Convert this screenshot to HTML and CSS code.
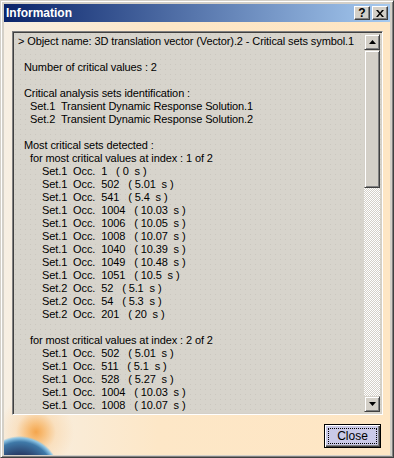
FILE: index.html
```html
<!DOCTYPE html>
<html lang="en">
<head>
    <meta charset="UTF-8">
    <title>Information</title>
    <link rel="stylesheet" href="styles.css">
</head>
<body>
    <div class="window">
        <div class="titlebar">
            <span class="title">Information</span>
            <div class="title-buttons">
                <span class="tbtn">?</span>
                <span class="tbtn">
                    <svg width="8" height="7" viewBox="0 0 8 7"><path d="M0 0h2l2 2.5 2-2.5h2l-3 3.5 3 3.5h-2l-2-2.5-2 2.5h-2l3-3.5z" fill="#000"/></svg>
                </span>
            </div>
        </div>
        <div class="dialog">
            <div class="textbox">
                <div class="text">
                    <div class="l0">&gt; Object name: 3D translation vector (Vector).2 - Critical sets symbol.1</div>
                    <div class="l0"> </div>
                    <div class="l1">Number of critical values : 2</div>
                    <div class="l0"> </div>
                    <div class="l1">Critical analysis sets identification :</div>
                    <div class="l2">Set.1  Transient Dynamic Response Solution.1</div>
                    <div class="l2">Set.2  Transient Dynamic Response Solution.2</div>
                    <div class="l0"> </div>
                    <div class="l1">Most critical sets detected :</div>
                    <div class="l2">for most critical values at index : 1 of 2</div>
                    <div class="l3">Set.1  Occ.  1   ( 0  s )</div>
                    <div class="l3">Set.1  Occ.  502   ( 5.01  s )</div>
                    <div class="l3">Set.1  Occ.  541   ( 5.4  s )</div>
                    <div class="l3">Set.1  Occ.  1004   ( 10.03  s )</div>
                    <div class="l3">Set.1  Occ.  1006   ( 10.05  s )</div>
                    <div class="l3">Set.1  Occ.  1008   ( 10.07  s )</div>
                    <div class="l3">Set.1  Occ.  1040   ( 10.39  s )</div>
                    <div class="l3">Set.1  Occ.  1049   ( 10.48  s )</div>
                    <div class="l3">Set.1  Occ.  1051   ( 10.5  s )</div>
                    <div class="l3">Set.2  Occ.  52   ( 5.1  s )</div>
                    <div class="l3">Set.2  Occ.  54   ( 5.3  s )</div>
                    <div class="l3">Set.2  Occ.  201   ( 20  s )</div>
                    <div class="l0"> </div>
                    <div class="l2">for most critical values at index : 2 of 2</div>
                    <div class="l3">Set.1  Occ.  502   ( 5.01  s )</div>
                    <div class="l3">Set.1  Occ.  511   ( 5.1  s )</div>
                    <div class="l3">Set.1  Occ.  528   ( 5.27  s )</div>
                    <div class="l3">Set.1  Occ.  1004   ( 10.03  s )</div>
                    <div class="l3">Set.1  Occ.  1008   ( 10.07  s )</div>
                </div>
                <div class="scrollbar">
                    <div class="sbtn">
                        <svg width="7" height="4" viewBox="0 0 7 4"><path d="M3.5 0L7 4H0z" fill="#000"/></svg>
                    </div>
                    <div class="thumb"></div>
                    <div class="track"></div>
                    <div class="sbtn">
                        <svg width="7" height="4" viewBox="0 0 7 4"><path d="M0 0h7L3.5 4z" fill="#000"/></svg>
                    </div>
                </div>
            </div>
            <div class="footer">
                <button class="close-btn"><span class="focus">Close</span></button>
            </div>
        </div>
    </div>
</body>
</html>
```

FILE: styles.css
```css
html, body {
    margin: 0;
    padding: 0;
}
body {
    width: 394px;
    height: 458px;
    overflow: hidden;
    font-family: "Liberation Sans", Arial, sans-serif;
    font-size: 12px;
}
.window {
    width: 394px;
    height: 458px;
    box-sizing: border-box;
    background: #d4d0c8;
    border: 1px solid;
    border-color: #d4d0c8 #404040 #404040 #d4d0c8;
    box-shadow: inset 1px 1px 0 #fff, inset -1px -1px 0 #808080;
    padding: 3px;
    display: flex;
    flex-direction: column;
}
.titlebar {
    height: 18px;
    flex-shrink: 0;
    background: linear-gradient(to right, #0a246a, #a6caf0);
    display: flex;
    align-items: center;
    justify-content: space-between;
    padding: 0 2px;
}
.title {
    color: #fff;
    font-weight: bold;
    font-size: 12px;
}
.title-buttons {
    display: flex;
    gap: 2px;
}
.tbtn {
    width: 16px;
    height: 14px;
    box-sizing: border-box;
    background: #d4d0c8;
    border: 1px solid;
    border-color: #fff #404040 #404040 #fff;
    box-shadow: inset -1px -1px 0 #808080;
    display: flex;
    align-items: center;
    justify-content: center;
    font-weight: bold;
    font-size: 12px;
    line-height: 1;
    color: #000;
}
.dialog {
    flex: 1;
    display: flex;
    flex-direction: column;
    padding: 9px 7px 7px 8px;
    background:
        radial-gradient(circle at 16px 454px, #1c2440 0, #2a3f6a 22px, #3f79a8 34px, #8cc4e4 38px, rgba(140, 196, 228, 0) 40px),
        radial-gradient(circle at 32px 410px, #f4a54c 0, rgba(247, 178, 96, 0.8) 8px, rgba(250, 205, 150, 0.4) 20px, rgba(252, 224, 180, 0) 38px),
        linear-gradient(to right, #f7efe3, #fde7c7 40%, #fee6c4);
    background-repeat: no-repeat;
}
.textbox {
    height: 384px;
    box-sizing: border-box;
    border: 1px solid;
    border-color: #808080 #fff #fff #808080;
    box-shadow: inset 1px 1px 0 #404040, inset -1px -1px 0 #d4d0c8;
    padding: 2px;
    background-color: #d7d4cc;
    background-image: radial-gradient(#cbc7bf 0.7px, transparent 0.9px);
    background-size: 5px 5px;
    display: flex;
}
.text {
    flex: 1;
    padding: 1px 0 0 3px;
    line-height: 13px;
    font-size: 11px;
    letter-spacing: -0.1px;
    color: #000;
    overflow: hidden;
}
.text div {
    white-space: pre;
    height: 13px;
}
.l1 { padding-left: 6px; }
.l2 { padding-left: 12px; }
.l3 { padding-left: 24px; }
.scrollbar {
    width: 16px;
    display: flex;
    flex-direction: column;
}
.sbtn, .thumb {
    box-sizing: border-box;
    background: #d4d0c8;
    border: 1px solid;
    border-color: #d4d0c8 #404040 #404040 #d4d0c8;
    box-shadow: inset 1px 1px 0 #fff, inset -1px -1px 0 #808080;
}
.sbtn {
    height: 16px;
    display: flex;
    align-items: center;
    justify-content: center;
}
.thumb {
    height: 138px;
}
.track {
    flex: 1;
    background: repeating-conic-gradient(#d4d0c8 0 25%, #fff 0 50%) 0 0 / 2px 2px;
}
.footer {
    display: flex;
    justify-content: flex-end;
    padding: 9px 2px 0 0;
}
.close-btn {
    width: 57px;
    height: 24px;
    box-sizing: border-box;
    border: 1px solid #000;
    background: #cacae8;
    box-shadow: inset 1px 1px 0 #fff, inset -1px -1px 0 #404040, inset -2px -2px 0 #808080;
    padding: 3px;
    font-family: "Liberation Sans", Arial, sans-serif;
    font-size: 12px;
    color: #000;
    display: flex;
}
.focus {
    flex: 1;
    border: 1px dotted #000;
    display: flex;
    align-items: center;
    justify-content: center;
}
```
